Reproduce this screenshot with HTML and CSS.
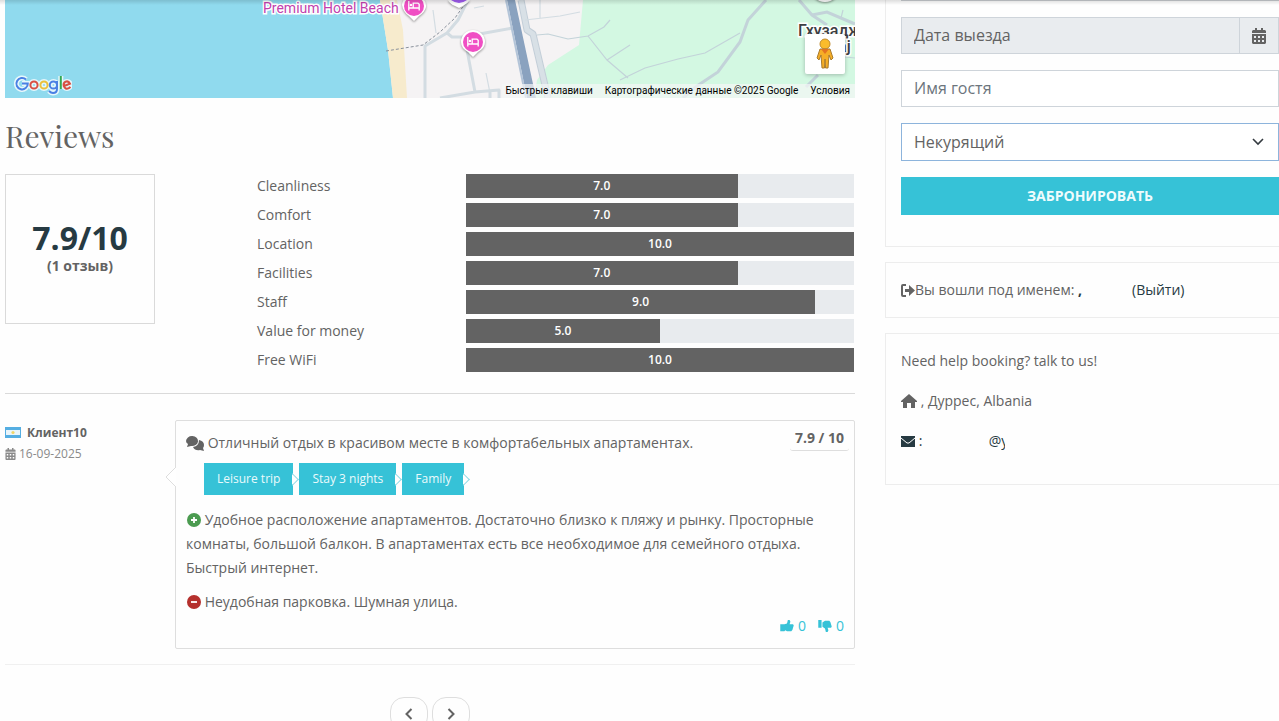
FILE: index.html
```html
<!DOCTYPE html>
<html lang="ru">
<head>
<meta charset="utf-8">
<meta name="viewport" content="width=device-width, initial-scale=1">
<title>Reviews</title>
<link rel="stylesheet" href="styles.css">
</head>
<body>
<svg class="defs" aria-hidden="true">
  <symbol id="calendar" viewBox="0 0 14 16"><path fill-rule="evenodd" d="M3 0h2v2h4V0h2v2h2l1 1v2H0V3l1-1h2zM0 6h14v9l-1 1H1l-1-1zM2 8v2h2V8zm4 0v2h2V8zm4 0v2h2V8zM2 12v2h2v-2zm4 0v2h2v-2zm4 0v2h2v-2z"/></symbol>
  <symbol id="bed" viewBox="0 0 12 10"><path fill="none" stroke="#fff" stroke-width="1.3" d="M.8 0v9.500M.8 7h10.400M11.200 9.500V3.200L10 2.200H5.200V7"/><circle cx="3" cy="4" r="1.200" fill="#fff"/></symbol>
  <symbol id="thumb" viewBox="0 0 16 14"><path d="M0 5h5l3-1 1-4h2l1 2-1 3h4l1 1-.5 2-.5 1-.5 2-.5 1-1 1H8l-2-1-1 1H0z"/></symbol>
  <symbol id="thumb-split" viewBox="0 0 16 14"><path d="M0 5h4v9H0zM5 6l3-2 1-4h2l1 2-1 3h4l1 1-.5 2-.5 1-.5 2-.5 1-1 1H8l-3-2z"/></symbol>
</svg>
<div class="header-shadow"></div>
<div class="page">
  <main class="content">
    <section class="map" aria-label="Map">
      <svg class="map-art" viewBox="5 0 850 98" preserveAspectRatio="xMinYMin slice">
        <path fill="#f5f3f4" d="M5 0h850v98H5z"/>
        <path fill="#90daee" d="M5 0h375l8 50 5 48H5z"/>
        <path fill="#f7ebcd" d="M380 0h17l6 30 4 68h-14l-5-48z"/>
        <path fill="#d3f8e2" d="M583 0l-4 45-31 20-11 15-3 18h321V0z"/>
        <g fill="none" stroke="#d3dce2" stroke-width="3" stroke-linejoin="round">
          <path d="M468 0l-10 20-11 13-22 13v52M447 33l5 4h11l22-4 28-5M467 50l8 42M440 98l35-6 24-2v8M490 92v6"/>
          <path d="M521 0l6 30 6 4 15 64" stroke="#c3ced8" stroke-width="7"/><path d="M521 0l6 30 6 4 15 64" stroke="#d8e0e6" stroke-width="5"/>
          <path stroke-width="1.200" d="M433 10l3 23M525 20l35-4 20-4M540 0v18M474 8l10-2M486 73l4 20"/>
        </g>
        <g fill="none" stroke="#c3d3d9" stroke-width="1.200">
          <path d="M537 35l11-1 20 5 20-3 16-9 6-7M588 36l19 24 21 18M607 60l23-15M740 33l-35 20-27 6-33 9-25 12M843 10l-2 8M845 57l10 1"/>
          <path stroke-width="3" d="M766 0l-18 20-8 22-22 30-21 14-14 12M799 0l13 15 15 10M812 15l15-3 28 12M818 75l-12 12"/>
        </g>
        <path fill="#8aa2bf" d="M507 0h8l21 98h-9z"/>
        <path fill="none" stroke="#b3c4d8" stroke-width="2" d="M506 0l20 98"/>
        <path fill="none" stroke="#8a919c" stroke-dasharray="3 2" d="M386 51l37-6 17-13 15-14 7-10 6-8"/>
        <g class="pin"><path fill="#fff" d="M402 5a12 12 0 1 1 24 2q-1 5-7 9l-5 5-5-5q-6-4-7-11z"/><circle cx="414" cy="6" r="10" fill="#f04fc4"/><use href="#bed" x="408" y="1" width="12" height="10"/></g>
        <g class="pin"><path fill="#fff" d="M461 42a12 12 0 1 1 24 0q0 6-7 10l-5 5-5-5q-7-4-7-10z"/><circle cx="473" cy="42" r="10" fill="#f04fc4"/><use href="#bed" x="467" y="37" width="12" height="10"/></g>
        <g class="pin"><path fill="#fff" d="M448 0h22q-2 3-7 6l-4 2-4-2q-5-2-7-6z"/><path fill="#a15cf0" d="M451 0h16q-8 6-16 0z"/></g>
        <circle class="pin" cx="825" cy="-12" r="14" fill="#fff"/>
        <text class="poi" x="263" y="13">Premium Hotel Beach</text>
        <text class="town" x="798" y="36">Гхузадж</text>
        <text class="town" x="838" y="52">aj</text>
      </svg>
      <svg class="google" viewBox="0 0 58 22" role="img" aria-label="Google">
        <g fill="none" stroke="#e6f7fb" stroke-width="5"><path d="M12 4.500a5.700 5.700 0 1 0 1.800 4H8"/><circle cx="20" cy="10" r="3.600"/><circle cx="30" cy="10" r="3.600"/><circle cx="39.500" cy="10" r="3.600"/><path d="M43 6v8q0 4-4 4-2 0-4-2M46.800 1v13"/><circle cx="53" cy="10" r="3.500"/></g>
        <g fill="none" stroke-width="2"><path stroke="#4a80e4" d="M12 4.500a5.700 5.700 0 1 0 1.800 4H8"/><circle stroke="#d94f43" cx="20" cy="10" r="3.600"/><circle stroke="#ecc13c" cx="30" cy="10" r="3.600"/><path stroke="#4a80e4" d="M43 10a3.600 3.600 0 1 1-7.200 0 3.600 3.600 0 0 1 7.200 0M43 6v8q0 4-4 4-2 0-4-2"/><path stroke="#34a853" d="M46.800 1v13"/><path stroke="#d94f43" d="M50 11l6-2.300q-1.500-3.200-4.500-2-2.500 1.500-1.700 4.500 1.500 3.500 5 2 1-.6 1.500-1.500"/></g>
      </svg>
      <button class="pegman" type="button" aria-label="Street View"><svg viewBox="0 0 18 32"><circle cx="9" cy="6" r="5" fill="#fbbc2c" stroke="#c08a2c"/><path fill="#f6ae26" stroke="#a87b2e" d="M4 11h10l3 9-2 2-2-5-1 13H9.500L9 21l-.5 9H6L5 17l-2 5-2-2z"/><path fill="#e37422" d="M5 11h8l-4 5z"/></svg></button>
      <div class="attribution"><button type="button">Быстрые клавиши</button><span>Картографические данные ©2025 Google</span><a href="#">Условия</a></div>
    </section>

    <h2 class="title">Reviews</h2>
    <section class="summary">
      <div class="score"><strong>7.9/10</strong><span>(1 отзыв)</span></div>
      <dl class="ratings">
        <dt>Cleanliness</dt><dd><span style="width:70%">7.0</span></dd>
        <dt>Comfort</dt><dd><span style="width:70%">7.0</span></dd>
        <dt>Location</dt><dd><span style="width:100%">10.0</span></dd>
        <dt>Facilities</dt><dd><span style="width:70%">7.0</span></dd>
        <dt>Staff</dt><dd><span style="width:90%">9.0</span></dd>
        <dt>Value for money</dt><dd><span style="width:50%">5.0</span></dd>
        <dt>Free WiFi</dt><dd><span style="width:100%">10.0</span></dd>
      </dl>
    </section>

    <article class="review">
      <div class="author">
        <div class="name"><svg class="flag" viewBox="0 0 16 11"><path fill="#55aee2" d="M0 0h16v11H0z"/><path fill="#e9f5fb" d="M1 3h14v5H1z"/><circle cx="8" cy="5.500" r="1.600" fill="#f0d668"/></svg><strong>Клиент10</strong></div>
        <div class="date"><svg viewBox="0 0 14 16"><use href="#calendar"/></svg>16-09-2025</div>
      </div>
      <div class="bubble">
        <svg class="arrow" viewBox="0 0 11 20"><path fill="#fff" stroke="#dedede" d="M11 0L1 10l10 10"/></svg>
        <div class="bubble-head">
          <p><svg class="chat" viewBox="0 0 18 15"><path d="M0 5a6 5 0 1 1 5 5l-4 1 1-3q-2-1-2-3z"/><path d="M13 4q5 1 5 5 0 2-1 3l1 3-4-1q-5 1-7-3 6-1 6-7z"/></svg> Отличный отдых в красивом месте в комфортабельных апартаментах.</p>
          <strong class="mark">7.9 / 10</strong>
        </div>
        <ul class="tags"><li>Leisure trip</li><li>Stay 3 nights</li><li>Family</li></ul>
        <p class="pro"><svg class="dot" viewBox="0 0 14 14"><circle cx="7" cy="7" r="7" fill="#4b9b50"/><path stroke="#fff" stroke-width="1.800" d="M4 7h6M7 4v6"/></svg> Удобное расположение апартаментов. Достаточно близко к пляжу и рынку. Просторные комнаты, большой балкон. В апартаментах есть все необходимое для семейного отдыха. Быстрый интернет.</p>
        <p class="con"><svg class="dot" viewBox="0 0 14 14"><circle cx="7" cy="7" r="7" fill="#b5302d"/><path stroke="#fff" stroke-width="1.800" d="M4 7h6"/></svg> Неудобная парковка. Шумная улица.</p>
        <div class="votes">
          <button type="button" aria-label="Like 0"><svg viewBox="0 0 16 14"><use href="#thumb"/></svg>0</button>
          <button type="button" aria-label="Dislike 0"><svg viewBox="0 0 16 14"><g transform="matrix(1 0 0 -1 0 14)"><use href="#thumb-split" width="16" height="14"/></g></svg>0</button>
        </div>
      </div>
    </article>
    <nav class="pager" aria-label="Pages">
      <button type="button" aria-label="Previous"><svg viewBox="0 0 8 12"><path d="M6.500 1L1.500 6l5 5"/></svg></button>
      <button type="button" aria-label="Next"><svg viewBox="0 0 8 12"><path d="M1.500 1l5 5-5 5"/></svg></button>
    </nav>
  </main>

  <aside class="side">
    <form class="card booking">
      <div class="date-field"><input type="text" placeholder="Дата выезда" aria-label="Дата выезда" readonly><button type="button" aria-label="Calendar"><svg viewBox="0 0 14 16"><use href="#calendar"/></svg></button></div>
      <input class="field" type="text" placeholder="Имя гостя" aria-label="Имя гостя">
      <select class="field select" aria-label="Курение"><option>Некурящий</option></select>
      <button class="submit" type="button">ЗАБРОНИРОВАТЬ</button>
    </form>
    <div class="card login"><svg class="exit" viewBox="0 0 14 13"><path d="M5 0H2Q0 0 0 2v9q0 2 2 2h3v-2H2V2h3zM4 5h4V1l6 5.500L8 12V8H4z"/></svg>Вы вошли под именем: <span class="user">,</span><a href="#">(Выйти)</a></div>
    <div class="card help">
      <p>Need help booking? talk to us!</p>
      <p><svg class="house" viewBox="0 0 16 14"><path d="M8 0l8 7v1h-2v6h-4V9H6v5H2V8H0V7z"/></svg> , Дуррес, Albania</p>
      <p><a href="#"><svg class="mail" viewBox="0 0 14 11"><path d="M0 0h14v11H0z"/><path fill="none" stroke="#fff" d="M0 2l6 5h2l6-5"/></svg> <span class="mail-user">:</span><span>@</span><span class="mail-host">y</span></a></p>
    </div>
  </aside>
</div>
</body>
</html>
```
FILE: styles.css
```css
* { box-sizing: border-box; }
html { scrollbar-width: none; }
body {
  margin: 0;
  background: #fefefe;
  color: #636363;
  font: 14px/24px "Open Sans", "Noto Sans", sans-serif;
  overflow-x: hidden;
}
p, ul, dl, dd, h2 { margin: 0; padding: 0; }
button, input, select { font: inherit; color: inherit; }
button { padding: 0; border: 0; background: none; }
a { color: #263a42; text-decoration: none; }
svg { fill: currentColor; }
.defs { position: absolute; width: 0; height: 0; }
.header-shadow {
  position: absolute;
  top: 0;
  width: 100%;
  height: 5px;
  background: linear-gradient(rgba(0, 0, 0, .13), transparent);
  z-index: 2;
}
.page {
  display: grid;
  grid-template-columns: minmax(0, 850fr) minmax(0, 394fr);
  gap: 30px;
  padding-left: 5px;
}

/* map */
.map { position: relative; height: 98px; overflow: hidden; }
.map-art { display: block; width: 100%; height: 98px; }
.pin { filter: drop-shadow(0 1px 1px rgba(0, 0, 0, .4)); }
.poi, .town { font-family: Roboto, sans-serif; paint-order: stroke; stroke: #fff; stroke-width: 3px; }
.poi { font-size: 14px; fill: #c13fae; }
.town { font-size: 16px; font-weight: 500; fill: #3c4043; }
.google { position: absolute; left: 9px; bottom: 1px; width: 58px; height: 22px; }
.pegman {
  position: absolute;
  right: 10px;
  bottom: 24px;
  display: grid;
  place-items: center;
  width: 40px;
  height: 40px;
  background: #fff;
  border-radius: 2px;
  box-shadow: 0 1px 4px rgba(0, 0, 0, .25);
}
.pegman svg { width: 18px; height: 32px; }
.attribution {
  position: absolute;
  right: 0;
  bottom: 0;
  display: flex;
  gap: 12px;
  padding: 0 5px 0 4px;
  background: rgba(245, 247, 246, .7);
  color: #000;
  font: 10px/14px Roboto, sans-serif;
  white-space: nowrap;
}
.attribution a { color: #000; }

/* summary */
.title {
  margin: 18px 0;
  font: 400 30px/40px "Playfair Display", "Liberation Serif", serif;
}
.summary {
  display: grid;
  grid-template-columns: 150px minmax(0, 597px);
  justify-content: space-between;
  align-items: start;
  padding: 0 1px 21px 0;
  border-bottom: 1px solid #dadada;
}
.score {
  display: flex;
  flex-direction: column;
  align-items: center;
  justify-content: center;
  height: 150px;
  padding-bottom: 2px;
  border: 1px solid #dadada;
  font-weight: 700;
  line-height: 20px;
}
.score strong { color: #263a42; font-size: 32px; font-weight: 700; line-height: 36px; }
.ratings { display: grid; grid-template-columns: 35fr 65fr; row-gap: 5px; }
.ratings dd { background: #e8ebee; }
.ratings span {
  display: block;
  background: #636363;
  color: #fff;
  font-size: 12px;
  font-weight: 600;
  text-align: center;
}

/* review */
.review {
  display: grid;
  grid-template-columns: 170px minmax(0, 1fr);
  margin-top: 26px;
  padding-bottom: 15px;
  border-bottom: 1px solid #f0f0f0;
}
.author { padding-top: 2px; font-size: 12px; line-height: 21px; }
.name, .date { display: flex; align-items: center; }
.name { gap: 6px; }
.date { gap: 3px; color: #8a8a8a; }
.date svg { width: 11px; height: 12px; }
.flag { width: 16px; height: 11px; }
.bubble { position: relative; padding: 10px; border: 1px solid #dedede; border-radius: 2px; }
.arrow { position: absolute; left: -11px; top: 46px; width: 11px; height: 20px; }
.bubble-head { display: flex; justify-content: space-between; align-items: flex-start; }
.chat { width: 18px; height: 15px; vertical-align: -3px; }
.mark {
  margin: -5px -5px 0 0;
  padding: 0 5px;
  border-bottom: 1px solid #dedede;
  border-radius: 3px;
  white-space: nowrap;
}
.tags { display: flex; gap: 6px; margin: 8px 0 13px 18px; list-style: none; font-size: 12px; line-height: 32px; }
.tags li { position: relative; padding: 0 13px; background: #36c2d7; color: #eafafc; }
.tags li::after {
  content: "";
  position: absolute;
  right: -4px;
  top: 12px;
  width: 8px;
  height: 8px;
  border: solid #8ed9e5;
  border-width: 1px 1px 0 0;
  background: linear-gradient(45deg, transparent 50%, #fff 50%);
  transform: rotate(45deg);
}
.dot { width: 14px; height: 14px; margin-left: 1px; vertical-align: -2px; }
.con { margin-top: 10px; }
.votes { display: flex; justify-content: flex-end; gap: 12px; color: #36c2d7; }
.votes button { display: flex; align-items: center; gap: 4px; }
.votes svg { width: 14px; height: 12px; }
.pager { display: flex; justify-content: center; gap: 4px; margin-top: 32px; }
.pager button { display: grid; place-items: center; width: 38px; height: 34px; border: 1px solid #dedede; border-radius: 14px; }
.pager svg { width: 8px; height: 12px; fill: none; stroke: currentColor; stroke-width: 2; }

/* sidebar */
.side { display: flex; flex-direction: column; gap: 15px; }
.card { padding: 15px 0 15px 15px; border: 1px solid #ededed; border-right: 0; }
.booking {
  display: grid;
  gap: 16px;
  padding-top: 17px;
  padding-bottom: 31px;
  border-top: 0;
  background: linear-gradient(#c9cdd1, #c9cdd1) 15px 0 / 100% 1px no-repeat;
}
.date-field { display: flex; height: 37px; border: 1px solid #ced4da; background: #e9ecef; font-size: 16px; }
.date-field input { flex: 1; min-width: 0; padding: 0 12px 2px; border: 0; background: none; }
.date-field input::placeholder { color: #636363; opacity: 1; }
.date-field button { width: 39px; border-left: 1px solid #ced4da; }
.date-field svg { display: block; width: 14px; height: 16px; margin: auto; }
.field {
  width: 100%;
  height: 37px;
  padding: 0 12px 2px;
  border: 1px solid #ced4da;
  border-radius: 0;
  background: #fff;
  font-size: 16px;
}
.field::placeholder { color: #6c757d; opacity: 1; }
.select {
  height: 38px;
  padding-bottom: 0;
  appearance: none;
  border-color: #8db4dc;
  background: #fff url("data:image/svg+xml,%3Csvg xmlns='http://www.w3.org/2000/svg' viewBox='0 0 12 8'%3E%3Cpath d='M1 1l5 5 5-5' fill='none' stroke='%23343a40' stroke-width='1.6'/%3E%3C/svg%3E") right 14px center / 12px 8px no-repeat;
}
.submit { height: 38px; background: #36c2d7; color: #effcfd; font-weight: 700; }
.login { white-space: nowrap; }
.exit { width: 14px; height: 13px; vertical-align: -2px; }
.user { display: inline-block; width: 54px; color: #263a42; font-weight: 700; }
.help { display: grid; gap: 16px; padding-bottom: 31px; }
.house { width: 16px; height: 14px; vertical-align: -2px; }
.mail { width: 14px; height: 11px; vertical-align: -1px; }
.mail-user { display: inline-block; width: 70px; }
.mail-host { display: inline-block; width: 4px; overflow: hidden; vertical-align: top; }
```
